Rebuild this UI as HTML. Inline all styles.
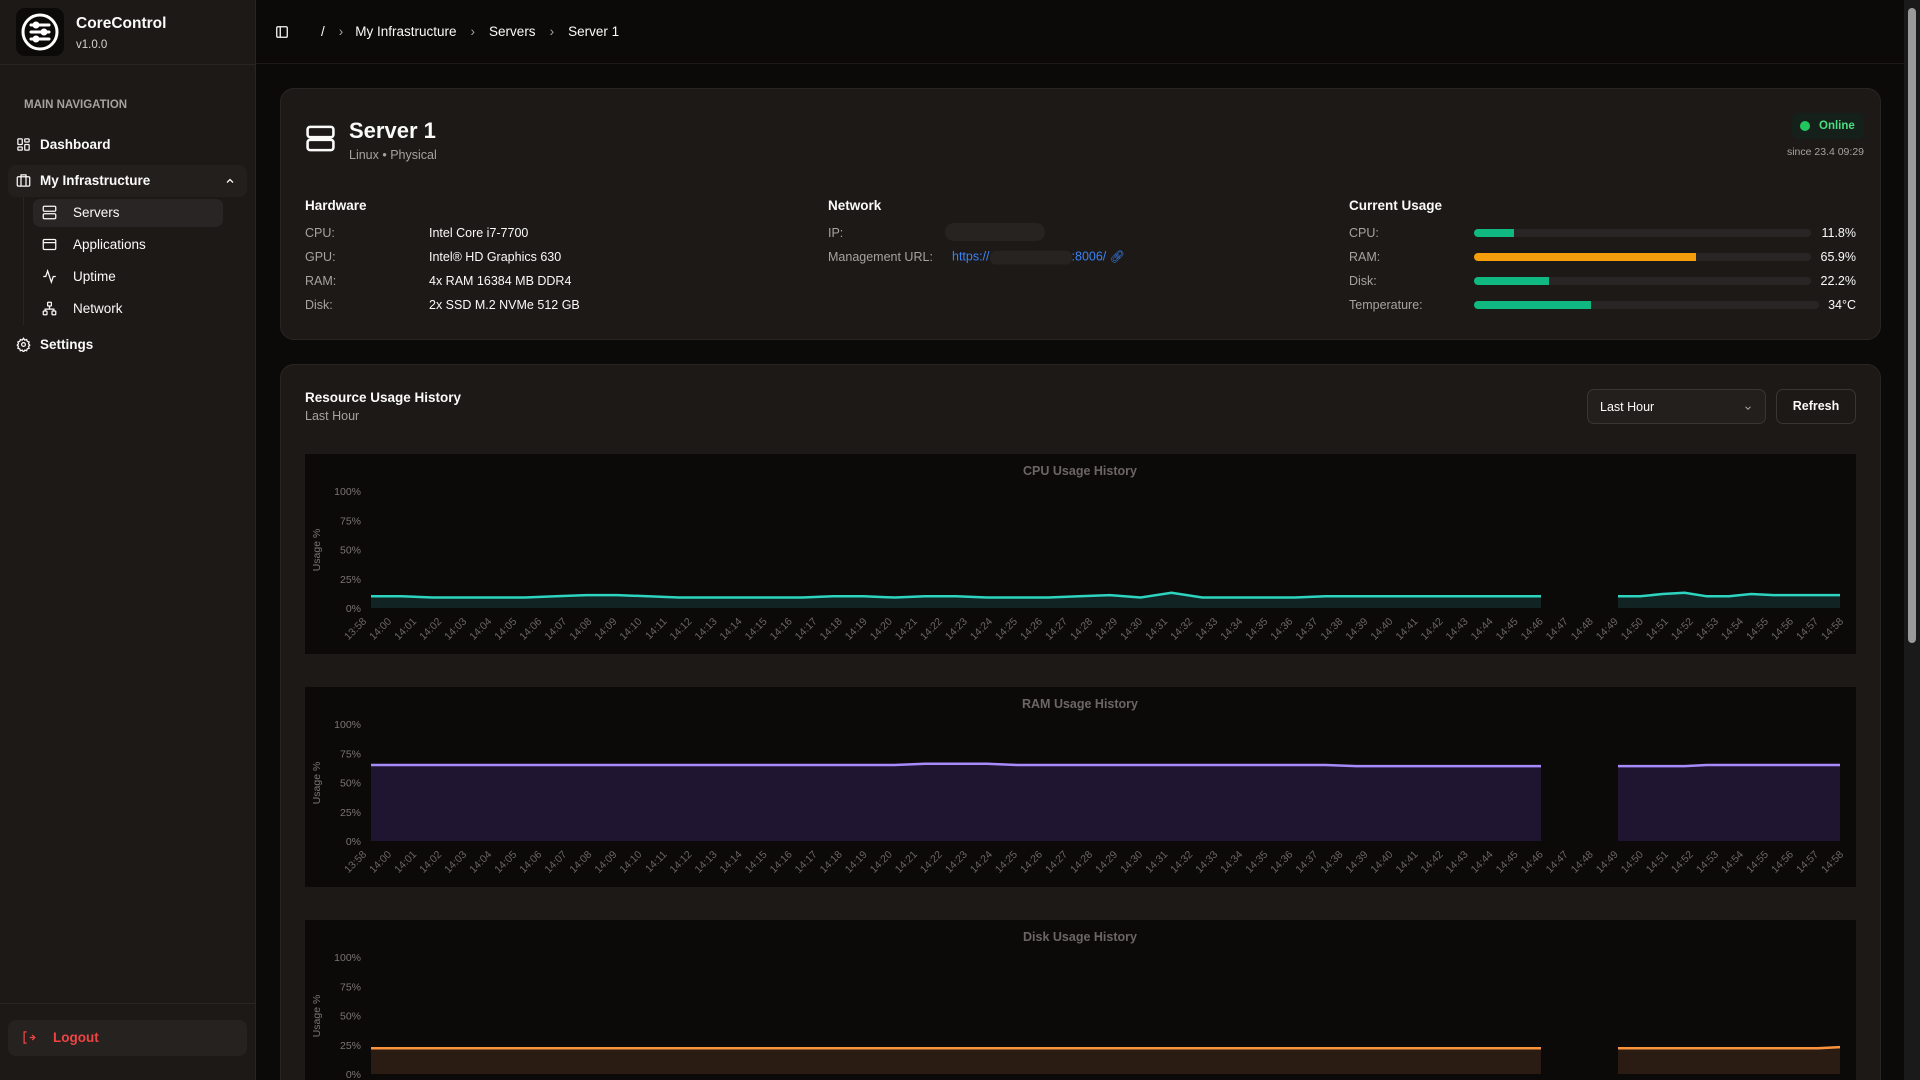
<!DOCTYPE html>
<html style="overflow:hidden"><head><meta charset="utf-8">
<style>
*{box-sizing:border-box;margin:0;padding:0}
html,body{width:1920px;height:1080px;overflow:hidden}
body{background:#0c0a09;font-family:"Liberation Sans",sans-serif;color:#fafaf9;position:relative}
#root{position:absolute;left:0;top:0;width:1920px;height:1080px;overflow:hidden}
.abs{position:absolute}
#sb{left:0;top:0;width:256px;height:1080px;background:#1c1917;border-right:1px solid #292524}
.nav{position:absolute;font-size:13.5px;font-weight:bold;display:flex;align-items:center;white-space:nowrap}
.sub{font-weight:normal}
.card{position:absolute;background:#1c1917;border:1px solid #292524;border-radius:14px}
.lbl{position:absolute;font-size:12.5px;color:#a8a29e;transform:translateY(-50%)}
.val{position:absolute;font-size:12.5px;color:#fafaf9;transform:translateY(-50%);white-space:nowrap}
.bar{position:absolute;left:1474px;height:8px;border-radius:4px;background:#292524;transform:translateY(-50%)}
.bar i{display:block;height:100%;border-radius:4px 0 0 4px}
.panel{position:absolute;left:305px;width:1551px;height:200px;background:#0c0a09}
svg text{font-family:"Liberation Sans",sans-serif}
</style></head><body><div id="root">
<div id="sb" class="abs">
  <div class="abs" style="left:16px;top:8px;width:48px;height:48px;border-radius:9px;background:#0c0a09;display:flex;align-items:center;justify-content:center">
    <svg width="40" height="40" viewBox="0 0 40 40" fill="none" stroke="#fff" stroke-width="3" stroke-linecap="round"><circle cx="20" cy="20" r="17"/><path d="M11 13h18M11 20h18M11 27h18"/><circle cx="16" cy="13" r="2" fill="#fff"/><circle cx="24" cy="20" r="2" fill="#fff"/><circle cx="16" cy="27" r="2" fill="#fff"/></svg>
  </div>
  <div class="abs" style="left:76px;top:15px;font-size:15.5px;font-weight:bold">CoreControl</div>
  <div class="abs" style="left:76px;top:39px;font-size:11.5px;color:#d6d3d1">v1.0.0</div>
  <div class="abs" style="left:0;top:64px;width:256px;height:1px;background:#292524"></div>
  <div class="abs" style="left:24px;top:99px;font-size:11.5px;font-weight:bold;color:#a8a29e">MAIN NAVIGATION</div>
  <div class="nav" style="left:16px;top:137px"><svg width="15" height="15" viewBox="0 0 24 24" fill="none" stroke="#fafaf9" stroke-width="2"><rect x="3" y="3" width="7" height="9" rx="1"/><rect x="14" y="3" width="7" height="5" rx="1"/><rect x="14" y="12" width="7" height="9" rx="1"/><rect x="3" y="16" width="7" height="5" rx="1"/></svg><span style="margin-left:9px">Dashboard</span></div>
  <div class="abs" style="left:8px;top:165px;width:239px;height:32px;border-radius:8px;background:#231f1d"></div>
  <div class="nav" style="left:16px;top:173px"><svg width="15" height="15" viewBox="0 0 24 24" fill="none" stroke="#fafaf9" stroke-width="2"><rect x="2" y="6" width="20" height="15" rx="2"/><path d="M8 21V3h8v18"/></svg><span style="margin-left:9px">My Infrastructure</span></div>
  <svg class="abs" style="left:224px;top:175px" width="12" height="12" viewBox="0 0 24 24" fill="none" stroke="#fafaf9" stroke-width="2.5"><path d="M6 15l6-6 6 6"/></svg>
  <div class="abs" style="left:23px;top:197px;width:1px;height:128px;background:#292524"></div>
  <div class="abs" style="left:33px;top:199px;width:190px;height:28px;border-radius:7px;background:#292524"></div>
  <div class="nav sub" style="left:42px;top:205px"><svg width="15" height="15" viewBox="0 0 24 24" fill="none" stroke="#fafaf9" stroke-width="2"><rect x="2" y="2" width="20" height="8" rx="2"/><rect x="2" y="14" width="20" height="8" rx="2"/><path d="M6 6h.01M6 18h.01"/></svg><span style="margin-left:16px">Servers</span></div>
  <div class="nav sub" style="left:42px;top:237px"><svg width="15" height="15" viewBox="0 0 24 24" fill="none" stroke="#fafaf9" stroke-width="2"><rect x="2" y="4" width="20" height="16" rx="2"/><path d="M2 9h20"/></svg><span style="margin-left:16px">Applications</span></div>
  <div class="nav sub" style="left:42px;top:269px"><svg width="15" height="15" viewBox="0 0 24 24" fill="none" stroke="#fafaf9" stroke-width="2"><path d="M22 12h-4l-3 9L9 3l-3 9H2"/></svg><span style="margin-left:16px">Uptime</span></div>
  <div class="nav sub" style="left:42px;top:301px"><svg width="15" height="15" viewBox="0 0 24 24" fill="none" stroke="#fafaf9" stroke-width="2"><rect x="9" y="2" width="6" height="6" rx="1"/><rect x="2" y="16" width="6" height="6" rx="1"/><rect x="16" y="16" width="6" height="6" rx="1"/><path d="M5 16v-3h14v3M12 8v5"/></svg><span style="margin-left:16px">Network</span></div>
  <div class="nav" style="left:16px;top:337px"><svg width="15" height="15" viewBox="0 0 24 24" fill="none" stroke="#fafaf9" stroke-width="2"><circle cx="12" cy="12" r="3"/><path d="M12 2l2 3 3-1 1 3 3 1-1 3 2 2-2 2 1 3-3 1-1 3-3-1-2 3-2-3-3 1-1-3-3-1 1-3-2-2 2-2-1-3 3-1 1-3 3 1z"/></svg><span style="margin-left:9px">Settings</span></div>
  <div class="abs" style="left:0;top:1003px;width:256px;height:1px;background:#292524"></div>
  <div class="abs" style="left:8px;top:1020px;width:239px;height:36px;border-radius:8px;background:#262220"></div>
  <div class="nav" style="left:21px;top:1030px;color:#ef4444"><svg width="15" height="15" viewBox="0 0 24 24" fill="none" stroke="#ef4444" stroke-width="2"><path d="M9 3H5v18h4M14 12h8M18 8l4 4-4 4"/></svg><span style="margin-left:17px">Logout</span></div>
</div>

<div class="abs" style="left:256px;top:63px;width:1648px;height:1px;background:#1c1917"></div>
<svg class="abs" style="left:275px;top:25px" width="14" height="14" viewBox="0 0 24 24" fill="none" stroke="#fafaf9" stroke-width="2.2"><rect x="3" y="3" width="18" height="18" rx="2"/><path d="M9 3v18"/></svg>
<div class="abs" style="left:321px;top:24px;font-size:13.5px;color:#fafaf9;white-space:nowrap">/<span style="color:#a8a29e;margin:0 12px 0 14px">›</span>My Infrastructure<span style="color:#a8a29e;margin:0 14px">›</span>Servers<span style="color:#a8a29e;margin:0 14px">›</span>Server 1</div>

<div class="abs" style="left:1904px;top:0;width:16px;height:1080px;background:#1a1a1a"></div>
<div class="abs" style="left:1908px;top:8px;width:8px;height:635px;border-radius:4px;background:#9a9a9a"></div>

<div class="card" style="left:280px;top:88px;width:1601px;height:252px"></div>
<svg class="abs" style="left:305px;top:123px" width="31" height="31" viewBox="0 0 24 24" fill="none" stroke="#fafaf9" stroke-width="2"><rect x="2" y="3" width="20" height="8" rx="2"/><rect x="2" y="13" width="20" height="8" rx="2"/><path d="M6 7h.01M6 17h.01"/></svg>
<div class="abs" style="left:349px;top:118px;font-size:22px;font-weight:bold">Server 1</div>
<div class="abs" style="left:349px;top:148px;font-size:12.5px;color:#a8a29e">Linux • Physical</div>
<div class="abs" style="left:1792px;top:113px;width:72px;height:26px;border-radius:6px;background:#15201a"></div>
<div class="abs" style="left:1800px;top:121px;width:10px;height:10px;border-radius:50%;background:#22c55e"></div>
<div class="abs" style="left:1819px;top:120px;font-size:11.5px;font-weight:bold;color:#4ade80">Online</div>
<div class="abs" style="right:56px;top:146px;font-size:10.5px;color:#a8a29e">since 23.4 09:29</div>

<div class="abs" style="left:305px;top:198px;font-size:13.5px;font-weight:bold">Hardware</div>
<div class="lbl" style="left:305px;top:233px">CPU:</div><div class="val" style="left:429px;top:233px">Intel Core i7-7700</div>
<div class="lbl" style="left:305px;top:257px">GPU:</div><div class="val" style="left:429px;top:257px">Intel® HD Graphics 630</div>
<div class="lbl" style="left:305px;top:281px">RAM:</div><div class="val" style="left:429px;top:281px">4x RAM 16384 MB DDR4</div>
<div class="lbl" style="left:305px;top:305px">Disk:</div><div class="val" style="left:429px;top:305px">2x SSD M.2 NVMe 512 GB</div>

<div class="abs" style="left:828px;top:198px;font-size:13.5px;font-weight:bold">Network</div>
<div class="lbl" style="left:828px;top:233px">IP:</div>
<div class="abs" style="left:945px;top:223px;width:100px;height:18px;border-radius:9px;background:#262321"></div>
<div class="lbl" style="left:828px;top:257px">Management URL:</div>
<div class="val" style="left:952px;top:257px;color:#3b82f6">https://<span style="display:inline-block;width:82px;height:14px;background:#262321;vertical-align:middle;border-radius:6px"></span>:8006/ <span style="font-size:12px">🔗︎</span></div>

<div class="abs" style="left:1349px;top:198px;font-size:13.5px;font-weight:bold">Current Usage</div>
<div class="lbl" style="left:1349px;top:233px">CPU:</div><div class="bar" style="top:233px;width:337px"><i style="width:11.8%;background:#10b981"></i></div><div class="val" style="right:64px;top:233px">11.8%</div>
<div class="lbl" style="left:1349px;top:257px">RAM:</div><div class="bar" style="top:257px;width:337px"><i style="width:65.9%;background:#f59e0b"></i></div><div class="val" style="right:64px;top:257px">65.9%</div>
<div class="lbl" style="left:1349px;top:281px">Disk:</div><div class="bar" style="top:281px;width:337px"><i style="width:22.2%;background:#10b981"></i></div><div class="val" style="right:64px;top:281px">22.2%</div>
<div class="lbl" style="left:1349px;top:305px">Temperature:</div><div class="bar" style="top:305px;width:345px"><i style="width:34%;background:#10b981"></i></div><div class="val" style="right:64px;top:305px">34°C</div>

<div class="card" style="left:280px;top:364px;width:1601px;height:760px"></div>
<div class="abs" style="left:305px;top:390px;font-size:13.5px;font-weight:bold">Resource Usage History</div>
<div class="abs" style="left:305px;top:409px;font-size:12.5px;color:#a8a29e">Last Hour</div>
<div class="abs" style="left:1587px;top:389px;width:179px;height:35px;border:1px solid #3a3532;border-radius:7px;background:#231f1d;font-size:12.5px;padding:10px 12px">Last Hour<svg style="position:absolute;right:12px;top:13px" width="10" height="10" viewBox="0 0 24 24" fill="none" stroke="#a8a29e" stroke-width="2.5"><path d="M6 9l6 6 6-6"/></svg></div>
<div class="abs" style="left:1776px;top:389px;width:80px;height:35px;border:1px solid #3a3532;border-radius:7px;background:#1c1917;font-size:12.5px;font-weight:bold;text-align:center;line-height:33px">Refresh</div>

<div id="charts"></div>
</div>
<script>
var defs=[["CPU Usage History",454,"#2dd4bf","#112322",[10,10,9,9,9,9,10,11,11,10,9,9,9,9,9,10,10,9,10,10,9,9,9,10,11,9,13,9,9,9,9,10,10,10,10,10,10,10,10,10,10,12,13,10,10,12,11,11,11,11]],
["RAM Usage History",687,"#a78bfa","#1f1530",[65,65,65,65,65,65,65,65,65,65,65,65,65,65,65,65,65,65,66,66,66,65,65,65,65,65,65,65,65,65,65,65,64,64,64,64,64,64,64,64,64,64,64,65,65,65,65,65,65,65]],
["Disk Usage History",920,"#fb923c","#2a1c12",[22,22,22,22,22,22,22,22,22,22,22,22,22,22,22,22,22,22,22,22,22,22,22,22,22,22,22,22,22,22,22,22,22,22,22,22,22,22,22,22,22,22,22,22,22,22,22,22,22,23]]];
var h="";
var labels=["13:58"];for(var m=0;m<=58;m++)labels.push("14:"+(m<10?"0":"")+m);
defs.forEach(function(d){
 var top=d[1],s='<svg class="panel" style="top:'+top+'px" width="1551" height="200">';
 s+='<text x="775" y="21" text-anchor="middle" font-size="12.5" font-weight="bold" fill="#6b6663">'+d[0]+'</text>';
 var y0=154,y1=37;
 ["100%","75%","50%","25%","0%"].forEach(function(t,i){s+='<text x="56" y="'+(y1+i*(y0-y1)/4+4)+'" text-anchor="end" font-size="10.5" fill="#7a7572">'+t+'</text>';});
 s+='<text transform="translate(15,96) rotate(-90)" text-anchor="middle" font-size="10.5" fill="#7a7572">Usage %</text>';
 var x0=66,x1=1535,n=labels.length;
 labels.forEach(function(l,i){var x=x0-8+i*(x1-x0+8)/(n-1);s+='<text transform="translate('+(x+4)+','+(y0+14)+') rotate(-45)" text-anchor="end" font-size="10.5" fill="#6b6663">'+l+'</text>';});
 var v=d[4],segs=[[0,38],[39,49]],gx0=x0,gx1=1236,gx2=1313;
 function X(i){return i<=38?gx0+i*(gx1-gx0)/38:gx2+(i-39)*(x1-gx2)/10;}
 segs.forEach(function(sg){var p="";for(var i=sg[0];i<=sg[1];i++){var x=X(i),y=y0-(y0-y1)*v[i]/100;p+=(i==sg[0]?"M":"L")+x.toFixed(1)+","+y.toFixed(1);}
  var fx=X(sg[0]),lx=X(sg[1]);
  s+='<path d="'+p+'L'+lx+','+y0+'L'+fx+','+y0+'Z" fill="'+d[3]+'"/><path d="'+p+'" fill="none" stroke="'+d[2]+'" stroke-width="2.5"/>';});
 s+='</svg>';h+=s;});
document.getElementById("charts").innerHTML=h;
</script>
</body></html>
